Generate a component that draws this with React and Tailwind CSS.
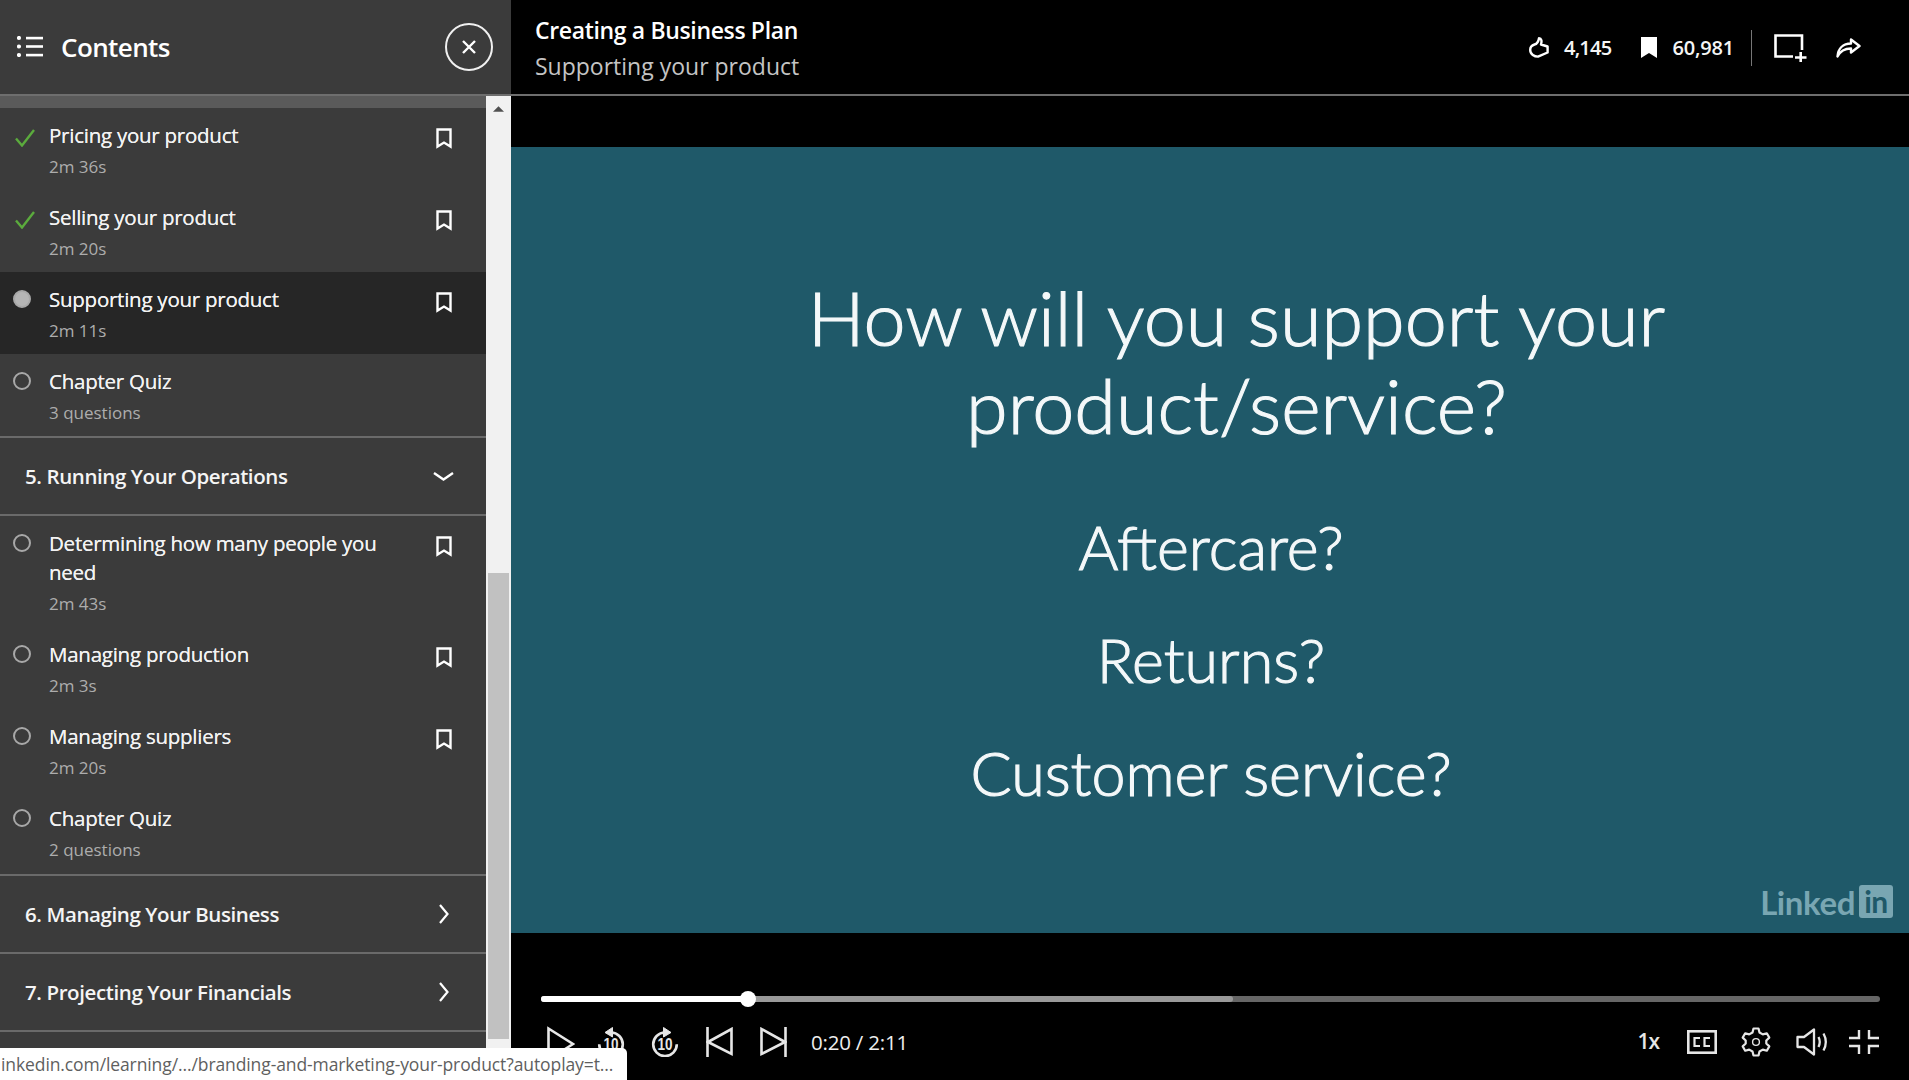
import React from "react";

const Bookmark = ({ filled = false, className = "w-[16px] h-[21px]" }) => (
  <svg viewBox="0 0 16 21" className={className} fill={filled ? "#fff" : "none"} stroke="#fff" strokeWidth={filled ? 0 : 2.4}>
    {filled ? <path d="M0 0H16V21L8 16L0 21Z" /> : <path d="M1.5 1.5H14.5V18.6L8 14.6L1.5 18.6Z" strokeLinejoin="miter" />}
  </svg>
);
const Check = () => (
  <svg viewBox="0 0 20 18" className="w-[20px] h-[18px] ml-[2px]" fill="none" stroke="#5bab3d" strokeWidth="2.4">
    <path d="M1 9.5L7 16.5L19 1" />
  </svg>
);
const Circle = ({ current }) => (
  <div className={"w-[18px] h-[18px] rounded-full border-2 border-[#a8a8a8] " + (current ? "bg-[#b5b5b5]" : "")} />
);

const Row = ({ title, sub, status = "empty", mark = true, current = false, h = "h-[82px]" }) => (
  <div className={"flex items-start pt-[13px] " + h + " " + (current ? "bg-[#262626]" : "")}>
    <div className={"w-[49px] shrink-0 pl-[13px] " + (status === "check" ? "pt-[8px]" : "pt-[5px]")}>
      {status === "check" ? <Check /> : <Circle current={status === "current"} />}
    </div>
    <div className="w-[350px] shrink-0">
      <div className="text-[20.5px] leading-[29px] text-[#f2f2f2] tracking-[-0.25px] [text-shadow:0_0_0.4px_#f2f2f2]">{title}</div>
      <div className="text-[17px] leading-[22px] mt-[6px] text-[#adadad] tracking-[0px]">{sub}</div>
    </div>
    {mark && (
      <div className="ml-[37px] pt-[7px]">
        <Bookmark />
      </div>
    )}
  </div>
);

const Section = ({ title, open }) => (
  <div className="h-[78px] flex items-center justify-between border-b-2 border-[#6a6a6a] pl-[25px]">
    <span className="text-[20.5px] font-semibold text-[#f5f5f5] tracking-[-0.4px] mt-[1px]">{title}</span>
    {open ? (
      <svg viewBox="0 0 21 9" className="w-[21px] h-[9px] mr-[32px]" fill="none" stroke="#fff" strokeWidth="2.4"><path d="M1 1L10.5 7.5L20 1" /></svg>
    ) : (
      <svg viewBox="0 0 10 20" className="w-[10px] h-[20px] mr-[37px]" fill="none" stroke="#fff" strokeWidth="2.2"><path d="M1 1L8.5 10L1 19" /></svg>
    )}
  </div>
);

const Replay = ({ flip }) => (
  <svg viewBox="0 0 28 30" className="w-[28px] h-[30px]" fill="none" stroke="#e6e6e6" strokeWidth="2.6">
    <g transform={flip ? "translate(28 0) scale(-1 1)" : undefined}>
      <path d="M14 5.5A11.8 11.8 0 1 1 2.2 17.3" />
      <path d="M15.5 0.5L8 5.5L15.5 10Z" fill="#e6e6e6" strokeWidth="1" />
    </g>
    <text x="14" y="22.5" textAnchor="middle" fontSize="16" fontWeight="700" fill="#e6e6e6" stroke="none" fontFamily="'Liberation Sans',sans-serif" textLength="15" lengthAdjust="spacingAndGlyphs">10</text>
  </svg>
);

export default function App() {
  return (
    <div className="w-full h-screen overflow-hidden flex bg-black relative font-['Open_Sans','Noto_Sans',sans-serif]">
      <aside className="w-[511px] shrink-0 h-full flex flex-col bg-[#3b3b3b]">
        <header className="h-[96px] shrink-0 flex items-center border-b-2 border-[#6e6e6e] pl-[17px] pr-[18px]">
          <svg viewBox="0 0 26 21" className="w-[26px] h-[21px] mb-[1px]" fill="#fff">
            <circle cx="2" cy="2" r="2.1" /><circle cx="2" cy="10.5" r="2.1" /><circle cx="2" cy="19" r="2.1" />
            <rect x="9" y="0.8" width="17" height="2.6" /><rect x="9" y="9.2" width="17" height="2.6" /><rect x="9" y="17.8" width="17" height="2.6" />
          </svg>
          <span className="ml-[18px] text-[26px] font-semibold text-white tracking-[-0.6px]">Contents</span>
          <div className="ml-auto w-[48px] h-[48px] rounded-full border-2 border-[#f0f0f0] flex items-center justify-center">
            <svg viewBox="0 0 14 14" className="w-[14px] h-[14px]" stroke="#fff" strokeWidth="2.4"><path d="M1 1L13 13M13 1L1 13" /></svg>
          </div>
        </header>
        <div className="flex-1 flex min-h-0">
          <div className="w-[486px] shrink-0 overflow-hidden">
            <div className="h-[12px] bg-[#5a5a5a]" />
            <Row title="Pricing your product" sub="2m 36s" status="check" />
            <Row title="Selling your product" sub="2m 20s" status="check" />
            <Row title="Supporting your product" sub="2m 11s" status="current" current />
            <Row title="Chapter Quiz" sub="3 questions" mark={false} />
            <div className="border-t-2 border-[#6a6a6a]" />
            <Section title="5. Running Your Operations" open />
            <Row title="Determining how many people you need" sub="2m 43s" h="h-[111px]" />
            <Row title="Managing production" sub="2m 3s" />
            <Row title="Managing suppliers" sub="2m 20s" />
            <Row title="Chapter Quiz" sub="2 questions" mark={false} h="h-[83px]" />
            <div className="border-t-2 border-[#6a6a6a]" />
            <Section title="6. Managing Your Business" />
            <Section title="7. Projecting Your Financials" />
          </div>
          <div className="w-[25px] bg-[#f1f1f1] flex flex-col items-center">
            <svg viewBox="0 0 12 6" className="w-[11px] h-[6px] mt-[10px]" fill="#505050"><path d="M0 6L6 0L12 6Z" /></svg>
            <div className="w-[21px] h-[466px] mt-[461px] bg-[#c1c1c1]" />
          </div>
        </div>
      </aside>

      <main className="flex-1 min-w-0 flex flex-col">
        <header className="h-[96px] shrink-0 flex items-center border-b-2 border-[#6e6e6e] pl-[24px]">
          <div className="flex flex-col mt-[1px]">
            <span className="text-[23px] leading-[36px] font-semibold text-white tracking-[-0.35px]">Creating a Business Plan</span>
            <span className="text-[23px] leading-[36px] text-[#c4c4c4] tracking-[0px]">Supporting your product</span>
          </div>
          <div className="ml-auto flex items-center mr-[48px] mt-[1px]">
            <svg viewBox="0 0 20 21" className="w-[20px] h-[21px]" fill="none" stroke="#fff" strokeWidth="2.4" strokeLinejoin="round">
              <path d="M5.5 7.5C7.5 7 9.5 4.5 10 1.2C12.5 1.2 13 4 12 7.5L18.6 9.5V15.5L9 19.6C5.5 19.6 1.2 17.5 1.2 13C1.2 10.5 3 8.2 5.5 7.5Z" />
            </svg>
            <span className="ml-[15px] text-[20px] font-semibold text-[#f5f5f5] tracking-[-0.7px]">4,145</span>
            <div className="ml-[29px]"><Bookmark filled /></div>
            <span className="ml-[16px] text-[20px] font-semibold text-[#f5f5f5] tracking-[-0.2px]">60,981</span>
            <div className="ml-[17px] w-[1px] h-[36px] bg-[#777]" />
            <svg viewBox="0 0 33 28" className="ml-[22px] w-[33px] h-[28px]" fill="none" stroke="#fff" strokeWidth="2.6">
              <path d="M19 22.5H1.5V1.5H28V16" /><path d="M21 23.5H32.5M26.7 18V28" />
            </svg>
            <svg viewBox="0 0 25 20" className="ml-[29px] w-[25px] h-[20px]" fill="none" stroke="#fff" strokeWidth="2.4" strokeLinejoin="round">
              <path d="M15 1.5L23.5 8L15 14.5V10.5C9 10.5 4.5 12.5 1.5 18.5C2 10.5 7 5.5 15 5.5Z" />
            </svg>
          </div>
        </header>

        <div className="h-[51px] shrink-0" />

        <section className="h-[786px] shrink-0 bg-[#1f5969] relative flex flex-col items-center text-[#f4f8f9] font-['Lato',sans-serif] font-light [-webkit-text-stroke:1.1px_#f4f8f9]">
          <div className="mt-[126px] ml-[53px] text-[75.5px] leading-[88px] text-center">
            <div>How will you support your</div>
            <div>product/service?</div>
          </div>
          <div className="flex flex-col items-center text-[61px] leading-[113px] mt-[41px] ml-[2px]">
            <div>Aftercare?</div>
            <div>Returns?</div>
            <div>Customer service?</div>
          </div>
          <div className="absolute right-[16px] bottom-[15px] flex items-center gap-[4px] [-webkit-text-stroke:0px]">
            <span className="text-[33px] leading-[32px] font-bold text-[#79a6b2] tracking-[-0.4px]">Linked</span>
            <span className="w-[34px] h-[33px] rounded-[3px] bg-[#79a6b2] text-[#1f5969] text-[30px] leading-[33px] font-bold text-center tracking-[-0.5px]">in</span>
          </div>
        </section>

        <div className="mt-[63px] ml-[30px] mr-[29px] h-[6px] rounded-full bg-[#666] relative">
          <div className="absolute left-0 top-0 h-[6px] w-[692px] rounded-full bg-[#999]" />
          <div className="absolute left-0 top-0 h-[6px] w-[207px] rounded-full bg-white" />
          <div className="absolute left-[199px] top-[-5px] w-[16px] h-[16px] rounded-full bg-white" />
        </div>

        <div className="mt-[23px] ml-[36px] mr-[30px] flex items-center h-[34px]">
          <svg viewBox="0 0 28 36" className="w-[28px] h-[36px] mt-[3px]" fill="none" stroke="#e8e8e8" strokeWidth="2.6"><path d="M1.5 2.5V33.5L26 18Z" /></svg>
          <div className="ml-[22px]"><Replay /></div>
          <div className="ml-[26px]"><Replay flip /></div>
          <svg viewBox="0 0 27 30" className="ml-[27px] w-[27px] h-[30px]" fill="none" stroke="#e6e6e6" strokeWidth="2.6"><path d="M1.5 0V30" /><path d="M25.5 2V27L2 15Z" /></svg>
          <svg viewBox="0 0 27 30" className="ml-[27px] w-[27px] h-[30px]" fill="none" stroke="#e6e6e6" strokeWidth="2.6"><path d="M25.5 0V30" /><path d="M1.5 2V27L25 15Z" /></svg>
          <span className="ml-[24px] text-[20.5px] text-[#eeeeee] tracking-[-0.2px]">0:20 / 2:11</span>
          <span className="ml-auto text-[21px] font-semibold text-[#e6e6e6] tracking-[-1px] mr-[1px]">1x</span>
          <svg viewBox="0 0 30 24" className="ml-[27px] w-[30px] h-[24px]" fill="none" stroke="#e6e6e6" strokeWidth="2.6">
            <rect x="1.3" y="1.3" width="27.4" height="21.4" />
            <path d="M13 8H7.5V16H13M23 8H17.5V16H23" strokeWidth="2.2" />
          </svg>
          <svg viewBox="0 0 30 30" className="ml-[24px] w-[30px] h-[30px]" fill="none" stroke="#e6e6e6" strokeWidth="2.2" strokeLinejoin="round">
            <path d="M12.5 1.5H17.5L18.5 5.5L21.8 7.4L25.8 6.3L28.3 10.6L25.3 13.5V16.5L28.3 19.4L25.8 23.7L21.8 22.6L18.5 24.5L17.5 28.5H12.5L11.5 24.5L8.2 22.6L4.2 23.7L1.7 19.4L4.7 16.5V13.5L1.7 10.6L4.2 6.3L8.2 7.4L11.5 5.5Z" />
            <circle cx="15" cy="15" r="3.4" strokeWidth="1.4" />
          </svg>
          <svg viewBox="0 0 32 28" className="ml-[25px] w-[32px] h-[28px]" fill="none" stroke="#e6e6e6" strokeWidth="2.3">
            <path d="M1.5 9H8L18 1.5V26.5L8 19H1.5Z" strokeLinejoin="round" />
            <path d="M22.5 9C24 12 24 16 22.5 19M27.5 5.5C30.5 11 30.5 17 27.5 22.5" />
          </svg>
          <svg viewBox="0 0 30 24" className="ml-[21px] w-[30px] h-[24px]" fill="none" stroke="#e6e6e6" strokeWidth="2.4">
            <path d="M0 8H10V0M20 0V8H30M0 16H10V24M20 24V16H30" />
          </svg>
        </div>
      </main>

      <div className="absolute left-0 bottom-0 w-[627px] h-[32px] bg-white rounded-tr-[5px] flex items-center text-[17.5px] text-[#5f5f5f] tracking-[-0.1px] whitespace-nowrap overflow-hidden pl-[1px]">
        inkedin.com/learning/.../branding-and-marketing-your-product?autoplay=t...
      </div>
    </div>
  );
}
